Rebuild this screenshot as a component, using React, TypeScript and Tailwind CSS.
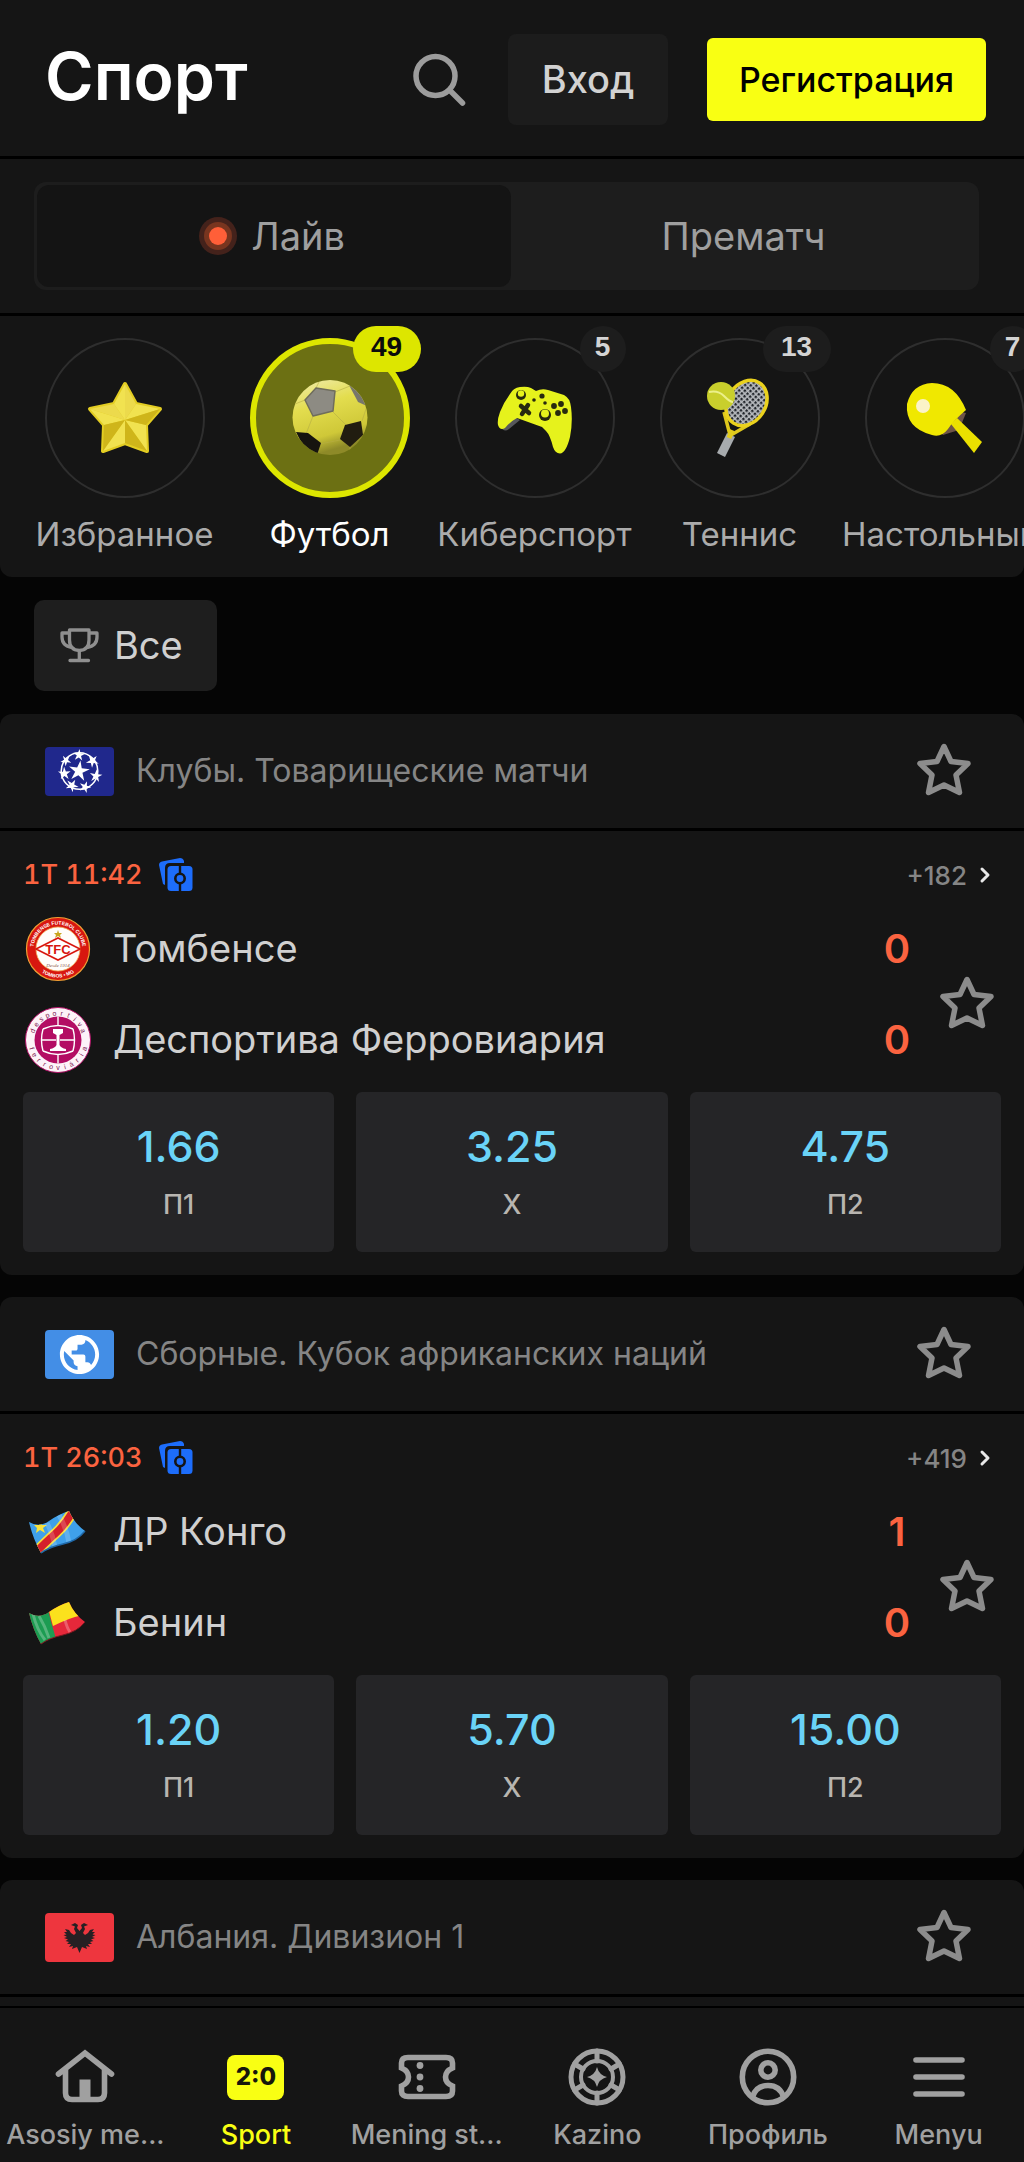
import type { ReactNode } from "react";
import { MdPublic } from "react-icons/md";

function StarOutline() {
  return (
    <svg viewBox="0 0 54 53" className="h-[53px] w-[54px]" fill="none" stroke="#8c8c8c" strokeWidth="5.5" strokeLinejoin="round" aria-hidden="true">
      <path d="M27 3.5 34 18.5 51 20.5 39 32 42.5 49.5 27 42 11.5 49.5 15 32 3 20.5 20 18.5Z" />
    </svg>
  );
}

function GoldStar() {
  return (
    <svg viewBox="0 0 80 80" className="size-20" aria-hidden="true">
      <path d="M40 6 51 26 75 31 61 47 62 73 40 65 18 73 19 47 5 31 29 26Z" fill="#e3cd22" stroke="#e3cd22" strokeWidth="4" strokeLinejoin="round" />
      <path d="M40 6V42L29 26ZM75 31 40 42 51 26ZM62 73 40 42 61 47ZM18 73 40 42 40 65ZM5 31 40 42 19 47Z" fill="#f1e250" />
      <path d="M40 6 40 42 51 26ZM5 31 40 42 29 26Z" fill="#ecda4c" />
      <path d="M75 31 40 42 61 47ZM18 73 40 42 19 47ZM62 73 40 42 40 65Z" fill="#cfb51a" />
    </svg>
  );
}

function Football() {
  return (
    <svg viewBox="0 0 80 80" className="size-20" aria-hidden="true">
      <defs>
        <linearGradient id="ballShade" x1="0" y1="0" x2="0.3" y2="1">
          <stop offset="0" stopColor="#f0ecb0" />
          <stop offset="0.4" stopColor="#e3dd4e" />
          <stop offset="0.8" stopColor="#cfc838" />
          <stop offset="1" stopColor="#8e8a28" />
        </linearGradient>
        <clipPath id="ballClip"><circle cx="40" cy="39.5" r="37.5" /></clipPath>
      </defs>
      <circle cx="40" cy="39.5" r="37.5" fill="url(#ballShade)" />
      <g clipPath="url(#ballClip)">
        <path d="M42 33 56 47M45 14 60 8M15 22 5 26M23 38 16 56M30 66 50 62M26 10 30 2M72 43 77 28M60 69 60 78" stroke="#b5ae45" strokeOpacity=".6" strokeWidth="1" fill="none" />
        <path d="M15 22 26 10 45 13 43 33 23 38Z" fill="#8d8b83" stroke="#6f6d5c" strokeWidth="1.5" strokeLinejoin="round" />
        <path d="M59 7 71 14 77 28 68 24Z" fill="#77766c" />
        <path d="M55 47 71 43 73 57 60 69 50 61Z" fill="#211c10" />
        <path d="M6 54 18 55 31 65 27 77 13 68Z" fill="#16140f" />
      </g>
    </svg>
  );
}

function Gamepad() {
  return (
    <svg viewBox="0 0 80 80" className="size-20" aria-hidden="true">
      <path d="M6 49Q9 55 14 51L25 42 18 38Z" fill="#56575b" />
      <path d="M25 9Q32 8 36 10L41 13Q47 10 53 12L69 17Q75 20 76 29Q78 44 75 59Q71 75 65 75.500Q60 75 58 69Q55 57 51 53L47 49 22 40Q16 43 10 50Q5 53 3 47Q2 42 5 34Q9 24 15 16Q18 10 25 9Z" fill="#e6f21c" />
      <g fill="#27290f">
        <circle cx="26" cy="17" r="5" /><circle cx="50" cy="37" r="6" />
        <circle cx="47" cy="18" r="2.6" /><circle cx="39" cy="22" r="1.8" /><circle cx="50" cy="25" r="1.8" />
        <circle cx="66" cy="26" r="2.9" /><circle cx="59" cy="28" r="2.9" /><circle cx="70" cy="33" r="2.9" /><circle cx="63" cy="35" r="2.900" />
      </g>
      <path d="M26 28 34 35M33 27 27 36" stroke="#27290f" strokeWidth="4.500" strokeLinecap="round" />
      <circle cx="26" cy="15.5" r="3.2" fill="#e6f21c" /><circle cx="50" cy="35.5" r="4" fill="#e6f21c" />
    </svg>
  );
}

function TennisRacket() {
  return (
    <svg viewBox="0 0 80 80" className="size-20" aria-hidden="true">
      <defs>
        <pattern id="strings" width="4" height="4" patternUnits="userSpaceOnUse" patternTransform="rotate(15)">
          <rect width="4" height="4" fill="#b9bcc0" />
          <rect width="2.4" height="2.4" fill="#22262c" />
        </pattern>
      </defs>
      <path d="M24 34 30 57M50 46 31 57" stroke="#dfc81c" strokeWidth="3.5" fill="none" />
      <ellipse cx="46.5" cy="25" rx="19" ry="24" transform="rotate(33 46.5 25)" fill="url(#strings)" stroke="#ead11d" strokeWidth="3.5" />
      <path d="M31 57 21 77" stroke="#a7abae" strokeWidth="9" />
      <path d="M32 52 29 60" stroke="#e2cc1c" strokeWidth="5" />
      <circle cx="21" cy="18" r="14" fill="#c9cf2c" />
      <path d="M9 14Q18 12 24 18T33 24" fill="none" stroke="#ecf08a" strokeWidth="2" />
    </svg>
  );
}

function Paddle() {
  return (
    <svg viewBox="0 0 80 80" className="size-20" aria-hidden="true">
      <path d="M61 35 54 52 38 57 34 52 56 34Z" fill="#6f5548" />
      <path d="M46 46 52 40 77 64 69 75Z" fill="#ebe000" />
      <path d="M27 5Q50 5 61 32Q48 43 43 51Q36 60 27 57Q0 50 2 26Q7 6 27 5Z" fill="#f0e800" />
      <circle cx="18" cy="28" r="7" fill="#fbf3c8" />
    </svg>
  );
}

function Trophy() {
  return (
    <svg viewBox="0 0 39 35" className="h-[35px] w-[39px]" fill="none" stroke="#8f8f8f" strokeWidth="3.3" strokeLinejoin="round" strokeLinecap="round" aria-hidden="true">
      <path d="M9.5 2H29V12Q29 22 19.3 22.5Q9.500 22 9.500 12ZM9.500 5H2V9Q2 18 12 19.500M29 5H37V9Q37 18 27 19.500M19.300 23V32M10 32.500H28.500" />
    </svg>
  );
}

function BetCards() {
  return (
    <svg viewBox="0 0 34 34" className="size-[34px]" aria-hidden="true">
      <path d="M0 7Q0 4 3 3.5L21 0Q24 0 25 3L25 5H11Q6 5 6 10V27L4 26Z" fill="#1d6dfb" />
      <rect x="8.5" y="8" width="25" height="25" rx="3.5" fill="#1d6dfb" />
      <path d="M21 8V16M21 25V33" stroke="#151515" strokeWidth="2.4" />
      <circle cx="21" cy="20.5" r="4.7" fill="#1d6dfb" stroke="#151515" strokeWidth="2.6" />
    </svg>
  );
}

const STARBALL = [
  { x: 34, y: 8, r: 6, a: 5 },
  { x: 47.5, y: 14, r: 6.5, a: 40 },
  { x: 51, y: 29, r: 6.5, a: 80 },
  { x: 40, y: 40, r: 6, a: 20 },
  { x: 27, y: 38.5, r: 6.5, a: 30 },
  { x: 19.5, y: 26.5, r: 6.5, a: 70 },
  { x: 21, y: 13.5, r: 5.5, a: 40 },
];

function ClubsFlag() {
  return (
    <svg viewBox="0 0 69 49" className="h-[49px] w-[69px] rounded" aria-hidden="true">
      <rect width="69" height="49" fill="#20288c" />
      <circle cx="34.5" cy="24" r="18.3" fill="none" stroke="#fff" strokeWidth="1.5" />
      <path d="M0-1 .22-.3 1-.3 .35.13 .62.85 0 .4-.62.85-.35.13-1-.3-.22-.3Z" transform="translate(34 24) rotate(8) scale(10.5)" fill="#fff" />
      {STARBALL.map((s) => (
        <path
          key={`${s.x}-${s.y}`}
          d="M0-1 .22-.3 1-.3 .35.13 .62.85 0 .4-.62.85-.35.13-1-.3-.22-.3Z"
          transform={`translate(${s.x} ${s.y}) rotate(${s.a}) scale(${s.r})`}
          fill="#fff"
        />
      ))}
    </svg>
  );
}

function WorldFlag() {
  return (
    <span className="flex h-[49px] w-[69px] items-center justify-center rounded bg-[#438ee6]">
      <MdPublic size={47} color="#fff" aria-hidden="true" />
    </span>
  );
}

function AlbaniaFlag() {
  return (
    <svg viewBox="0 0 69 49" className="h-[49px] w-[69px] rounded" aria-hidden="true">
      <rect width="69" height="49" fill="#ee363e" />
      <path d="M34.5 18 32 15 33 12 30 10 26 12 30 13.500 29 16 31 20 29 22 26 20 24 17 20 16 22 19 19 19 21.500 21.500 18.500 22 22 24 19 25 23 26.500 20.500 28 24 29 22 31 26 31 24 34 28 33 27 36 32 34 34.500 40 37 34 42 36 41 33 45 34 43 31 47 31 45 29 48.500 28 46 26.500 50 25 47 24 50.500 22 47.500 21.500 50 19 47 19 49 16 45 17 43 20 40 22 38 20 40 16 39 13.500 43 12 39 10 36 12 37 15Z" fill="#262023" />
    </svg>
  );
}

function TombenseCrest() {
  return (
    <svg viewBox="0 0 66 66" className="size-[66px]" aria-hidden="true">
      <defs>
        <path id="tomTop" d="M9.3 39.3A24.5 24.5 0 1 1 56.7 39.3" />
        <path id="tomBottom" d="M4.500 33A28.500 28.500 0 0 0 61.500 33" />
      </defs>
      <circle cx="33" cy="33" r="31.5" fill="#d8170f" stroke="#f0a035" strokeWidth="1.2" />
      <circle cx="33" cy="33" r="22" fill="#fffdfa" stroke="#f3b25a" strokeWidth="0.8" />
      <text fill="#fff" fontFamily="Liberation Sans" fontWeight="700" fontSize="5">
        <textPath href="#tomTop" startOffset="50%" textAnchor="middle">TOMBENSE FUTEBOL CLUBE</textPath>
      </text>
      <text fill="#fff" fontFamily="Liberation Sans" fontWeight="700" fontSize="5">
        <textPath href="#tomBottom" startOffset="50%" textAnchor="middle">TOMBOS • MG</textPath>
      </text>
      <path d="M33 14 34 17 37 17 35 19 36 22 33 20 30 22 31 19 29 17 32 17Z" fill="#c9a61e" />
      <path d="M11 33 33 22 55 33 33 44Z" fill="#fff" stroke="#d8170f" strokeWidth="1.6" />
      <text x="33" y="37.500" textAnchor="middle" fill="#d8170f" fontFamily="Liberation Sans" fontWeight="700" fontSize="13">TFC</text>
      <text x="33" y="51" textAnchor="middle" fill="#8c5a4a" fontFamily="Liberation Serif" fontStyle="italic" fontSize="5">Desde 1914</text>
    </svg>
  );
}

function CrestLetters({ word, from, to, flip }: { word: string; from: number; to: number; flip?: boolean }) {
  const letters = word.split("");
  return (
    <>
      {letters.map((letter, i) => {
        const angle = from + ((to - from) * i) / (letters.length - 1);
        return (
          <text
            key={i}
            x="33"
            y={flip ? 63 : 8.5}
            textAnchor="middle"
            fill="#7b1450"
            fontFamily="Liberation Sans"
            fontSize="7"
            transform={`rotate(${angle} 33 33)`}
          >
            {letter}
          </text>
        );
      })}
    </>
  );
}

function DesportivaCrest() {
  return (
    <svg viewBox="0 0 66 66" className="size-[66px]" aria-hidden="true">
      <circle cx="33" cy="33" r="32.5" fill="#fdf3f8" stroke="#b01065" strokeWidth="1" />
      <circle cx="33" cy="33" r="23.5" fill="#b30d63" />
      <path d="M18 22Q33 15 48 22M18 44Q33 51 48 44M18 22Q15 33 18 44M48 22Q51 33 48 44M33 9.5V18M33 48V56.5M16 33H31M35 33H50" fill="none" stroke="#fff" strokeWidth="1.4" />
      <path d="M28 22H38V26L34.500 28V38Q36 41 41 42V44H25V42Q30 41 31.500 38V28L28 26Z" fill="#fff" />
      <CrestLetters word="desportiva" from={-70} to={70} />
      <CrestLetters word="ferroviária" from={72} to={-72} flip />
    </svg>
  );
}

const FLAG_SHAPE = "M4 17Q14 23 24 16T44 6Q49 18 60 26Q52 36 38 39T16 48Q8 34 4 17Z";

function CongoFlag() {
  return (
    <svg viewBox="0 0 62 54" className="h-[54px] w-[62px]" aria-hidden="true">
      <clipPath id="congo"><path d={FLAG_SHAPE} /></clipPath>
      <g clipPath="url(#congo)">
        <rect width="62" height="54" fill="#3fa0ea" />
        <path d="M10 48Q22 36 31 28T48 6" stroke="#f6dc3a" strokeWidth="11" fill="none" />
        <path d="M10 48Q22 36 31 28T48 6" stroke="#d5202c" strokeWidth="7.5" fill="none" />
        <path d="M15 15 17 20 22 20 18 23 20 28 15 25 11 28 12 23 9 20 14 20Z" fill="#f8e23c" />
        <path d="M34 10Q42 24 44 38M22 18Q28 30 30 42" stroke="#fff" strokeOpacity=".18" strokeWidth="5" fill="none" />
      </g>
      <path d="M16 48Q24 42 38 39T60 26" stroke="#1f68a8" strokeWidth="1.500" fill="none" />
    </svg>
  );
}

function BeninFlag() {
  return (
    <svg viewBox="0 0 62 54" className="h-[54px] w-[62px]" aria-hidden="true">
      <clipPath id="benin"><path d={FLAG_SHAPE} /></clipPath>
      <g clipPath="url(#benin)">
        <rect width="62" height="54" fill="#e5283a" />
        <path d="M20 0H62V18Q52 20 44 23T28 30Z" fill="#fbe11d" />
        <path d="M0 0H20Q24 20 31 43L12 54H0Z" fill="#1c9c52" />
        <path d="M8 18Q12 34 20 44M40 24Q42 32 45 36M14 20Q20 30 24 42" stroke="#fff" strokeOpacity=".25" strokeWidth="3" fill="none" />
      </g>
      <path d="M16 48Q24 42 38 39T60 26" stroke="#7c1720" strokeWidth="1" fill="none" />
    </svg>
  );
}

type Sport = { name: string; count?: number; icon: ReactNode; active?: boolean };

const SPORTS: Sport[] = [
  { name: "Избранное", icon: <GoldStar /> },
  { name: "Футбол", count: 49, icon: <Football />, active: true },
  { name: "Киберспорт", count: 5, icon: <Gamepad /> },
  { name: "Теннис", count: 13, icon: <TennisRacket /> },
  { name: "Настольный теннис", count: 7, icon: <Paddle /> },
];

function SportItem({ name, count, icon, active }: Sport) {
  return (
    <button type="button" className="flex w-[205px] shrink-0 flex-col items-center">
      <span
        className={`relative flex size-40 items-center justify-center rounded-full ${
          active ? "border-[6px] border-[#dde600] bg-[#6c7013]" : "border-2 border-[#2e2e2e]"
        }`}
      >
        {icon}
        {count !== undefined && (
          <span
            className={`absolute flex h-[46px] items-center justify-center rounded-full pb-1 font-['Liberation_Sans',sans-serif] text-[28px] font-bold ${
              count > 9 ? "w-[68px]" : "w-[46px]"
            } ${active ? "-top-[18px] -right-[17px] bg-[#dde600] text-[#0c0c0c]" : "-top-[14px] -right-[13px] bg-[#1d1d1d] text-[#d4d4d4]"}`}
          >
            {count}
          </span>
        )}
      </span>
      <span className={`mt-3 w-full overflow-hidden text-[33px] leading-[48px] whitespace-nowrap ${active ? "text-white" : "text-[#ababab]"}`}>{name}</span>
    </button>
  );
}

type Team = { name: string; score: number; logo: ReactNode };
type Match = { time: string; more: string; teams: Team[]; odds: { value: string; label: string }[] };

function MatchBlock({ time, more, teams, odds }: Match) {
  return (
    <div className="px-[23px] pt-[22px] pb-[23px]">
      <div className="flex h-11 items-center">
        <span className="text-[27px] font-medium text-[#fb6340] tabular-nums">{time}</span>
        <span className="ml-4"><BetCards /></span>
        <a href="#match" className="ml-auto flex items-center gap-3 pr-2.5 text-[26px] font-medium text-[#858585]">
          {more}
          <svg viewBox="0 0 12 18" className="h-[18px] w-3" fill="none" stroke="#e8e8e8" strokeWidth="3" strokeLinecap="round" strokeLinejoin="round" aria-hidden="true">
            <path d="m3 3 6 6-6 6" />
          </svg>
        </a>
      </div>
      <div className="mt-1.5 flex items-center">
        <div className="min-w-0 flex-1">
          {teams.map((team) => (
            <div key={team.name} className="flex h-[91px] items-center">
              <span className="flex w-[90px] shrink-0 items-center pl-0.5">{team.logo}</span>
              <span className="min-w-0 flex-1 truncate text-[38px] text-[#d0d0d0]">{team.name}</span>
              <span className="w-12 text-center text-[40px] font-semibold text-[#fb6340]">{team.score}</span>
            </div>
          ))}
        </div>
        <button type="button" aria-label="В избранное" className="mt-4 mr-[7px] ml-[19px]"><StarOutline /></button>
      </div>
      <div className="mt-[7px] grid grid-cols-3 gap-[22px]">
        {odds.map((odd) => (
          <button key={odd.label} type="button" className="flex flex-col items-center rounded-md bg-[#252527] pt-6 pb-[18px]">
            <span className="text-[43px] leading-[60px] font-medium text-[#6ad3f7]">{odd.value}</span>
            <span className="text-[27px] leading-[58px] font-medium text-[#b8b5b0]">{odd.label}</span>
          </button>
        ))}
      </div>
    </div>
  );
}

function LeagueCard({ flag, title, match, className = "" }: { flag: ReactNode; title: string; match?: Match; className?: string }) {
  return (
    <section className={`bg-[#151515] ${className}`}>
      <header className="flex h-[117px] items-center border-b-3 border-black pr-[53px] pl-[45px]">
        {flag}
        <h2 className="ml-[22px] min-w-0 flex-1 truncate text-[32px] text-[#858585]">{title}</h2>
        <button type="button" aria-label={`В избранное: ${title}`} className="mb-1"><StarOutline /></button>
      </header>
      {match && <MatchBlock {...match} />}
    </section>
  );
}

const NAV: { label: string; icon: ReactNode; active?: boolean }[] = [
  {
    label: "Asosiy me...",
    icon: (
      <>
        <path d="M3.5 27 30 6 56.5 27M10.5 22V46Q10.5 52.5 17 52.5H43Q49.5 52.5 49.5 46V22" />
        <path d="M24.5 32.5H35.5V53H24.5Z" fill="currentColor" stroke="none" />
      </>
    ),
  },
  { label: "Sport", active: true, icon: null },
  {
    label: "Mening st...",
    icon: (
      <>
        <path d="M11 10.5H49Q55.5 10.5 55.5 16V21Q48.5 24 48.5 30T55.5 39V44Q55.5 49.5 49 49.5H11Q4.5 49.5 4.5 44V39Q11.5 36 11.5 30T4.5 21V16Q4.5 10.5 11 10.5Z" />
        <g fill="currentColor" stroke="none"><circle cx="23" cy="18.5" r="3.4" /><circle cx="23" cy="30" r="3.4" /><circle cx="23" cy="41.5" r="3.4" /></g>
      </>
    ),
  },
  {
    label: "Kazino",
    icon: (
      <>
        <circle cx="30" cy="30" r="26" strokeWidth="5" />
        <circle cx="30" cy="30" r="16" strokeWidth="4" />
        <path d="M30 4V14M30 46V56M7.5 17 16 22M44 38 52.5 43M7.5 43 16 38M44 22 52.5 17" strokeWidth="5" />
        <path d="M30 20Q32 28 40 30Q32 32 30 40Q28 32 20 30Q28 28 30 20Z" fill="currentColor" stroke="none" />
      </>
    ),
  },
  {
    label: "Профиль",
    icon: (
      <>
        <circle cx="30" cy="30" r="25.7" />
        <circle cx="30" cy="23" r="7.2" />
        <path d="M14.5 50Q18 38.5 30 38.5T45.5 50" />
      </>
    ),
  },
  { label: "Menyu", icon: <path d="M7 13H53M7 30H53M7 47H53" /> },
];

const MATCH_ONE: Match = {
  time: "1T 11:42",
  more: "+182",
  teams: [
    { name: "Томбенсе", score: 0, logo: <TombenseCrest /> },
    { name: "Деспортива Ферровиария", score: 0, logo: <DesportivaCrest /> },
  ],
  odds: [
    { value: "1.66", label: "П1" },
    { value: "3.25", label: "X" },
    { value: "4.75", label: "П2" },
  ],
};

const MATCH_TWO: Match = {
  time: "1T 26:03",
  more: "+419",
  teams: [
    { name: "ДР Конго", score: 1, logo: <CongoFlag /> },
    { name: "Бенин", score: 0, logo: <BeninFlag /> },
  ],
  odds: [
    { value: "1.20", label: "П1" },
    { value: "5.70", label: "X" },
    { value: "15.00", label: "П2" },
  ],
};

export default function App() {
  return (
    <div className="flex min-h-screen flex-col bg-[#050505] font-[Inter,'Noto_Sans',sans-serif] text-white">
      <header className="flex h-[159px] items-center border-b-3 border-black bg-[#151515] pt-[3px] pr-[38px] pl-[45px]">
        <h1 className="mb-1.5 text-[66px] font-semibold">Спорт</h1>
        <button type="button" aria-label="Поиск" className="mr-[42px] ml-auto">
          <svg viewBox="0 0 54 54" className="size-[54px]" fill="none" stroke="#9c9c9c" strokeWidth="5.5" strokeLinecap="round" aria-hidden="true">
            <circle cx="23.5" cy="23" r="19.5" />
            <path d="M38 37.5 50.5 50" />
          </svg>
        </button>
        <button type="button" className="mr-[39px] h-[91px] w-40 rounded-lg bg-[#1c1c1c] text-[38px] font-medium text-[#d2d2d2]">Вход</button>
        <button type="button" className="h-[83px] w-[279px] rounded-md bg-[#f9ff13] text-[34px] font-medium text-black">Регистрация</button>
      </header>

      <div className="border-b-3 border-black bg-[#151515] py-[23px] pr-[45px] pl-[34px]">
        <div className="grid h-[108px] grid-cols-[51fr_50fr] rounded-xl bg-[#1d1d1d] p-[3px]">
          <button type="button" className="flex items-center justify-center gap-3.5 rounded-xl bg-[#141414] pr-1 text-[38px] text-[#9f9f9f]">
            <span className="flex size-[38px] items-center justify-center rounded-full bg-[#44221b]">
              <span className="flex size-7 items-center justify-center rounded-full bg-[#78351f]">
                <span className="size-[18px] rounded-full bg-[#ff5f38]" />
              </span>
            </span>
            Лайв
          </button>
          <button type="button" className="text-[38px] text-[#9f9f9f]">Прематч</button>
        </div>
      </div>

      <nav aria-label="Виды спорта" className="flex overflow-x-auto rounded-b-xl bg-[#151515] pt-[22px] pb-[19px] pl-[22px] [scrollbar-width:none]">
        {SPORTS.map((sport) => (
          <SportItem key={sport.name} {...sport} />
        ))}
      </nav>

      <div className="px-[34px] py-[23px]">
        <button type="button" className="flex h-[91px] items-center gap-[15px] rounded-[10px] bg-[#1e1e1e] pr-[34px] pl-[26px] text-[38px] text-[#d0d0d0]">
          <Trophy />
          Все
        </button>
      </div>

      <main className="flex flex-1 flex-col gap-[22px]">
        <LeagueCard flag={<ClubsFlag />} title="Клубы. Товарищеские матчи" match={MATCH_ONE} className="rounded-xl" />
        <LeagueCard flag={<WorldFlag />} title="Сборные. Кубок африканских наций" match={MATCH_TWO} className="rounded-xl" />
        <LeagueCard flag={<AlbaniaFlag />} title="Албания. Дивизион 1" className="flex-1 rounded-t-xl" />
      </main>

      <nav aria-label="Основное меню" className="sticky bottom-0 grid grid-cols-6 border-t-2 border-black bg-[#151515] pt-[39px] pb-[7px]">
        {NAV.map(({ label, icon, active }) => (
          <a key={label} href={`#${label}`} className={`flex min-w-0 flex-col items-center gap-2 ${active ? "text-[#f9ff13]" : "text-[#a0a0a0]"}`}>
            {active ? (
              <span className="flex h-[60px] items-center">
                <span className="flex h-[45px] w-[57px] items-center justify-center rounded-lg bg-[#f9ff13] text-[24px] font-extrabold text-[#17170c]">2:0</span>
              </span>
            ) : (
              <svg viewBox="0 0 60 60" className="size-[60px]" fill="none" stroke="currentColor" strokeWidth="5.6" strokeLinecap="round" aria-hidden="true">
                {icon}
              </svg>
            )}
            <span className="text-center text-[27px] leading-10 font-medium whitespace-nowrap">{label}</span>
          </a>
        ))}
      </nav>
    </div>
  );
}
